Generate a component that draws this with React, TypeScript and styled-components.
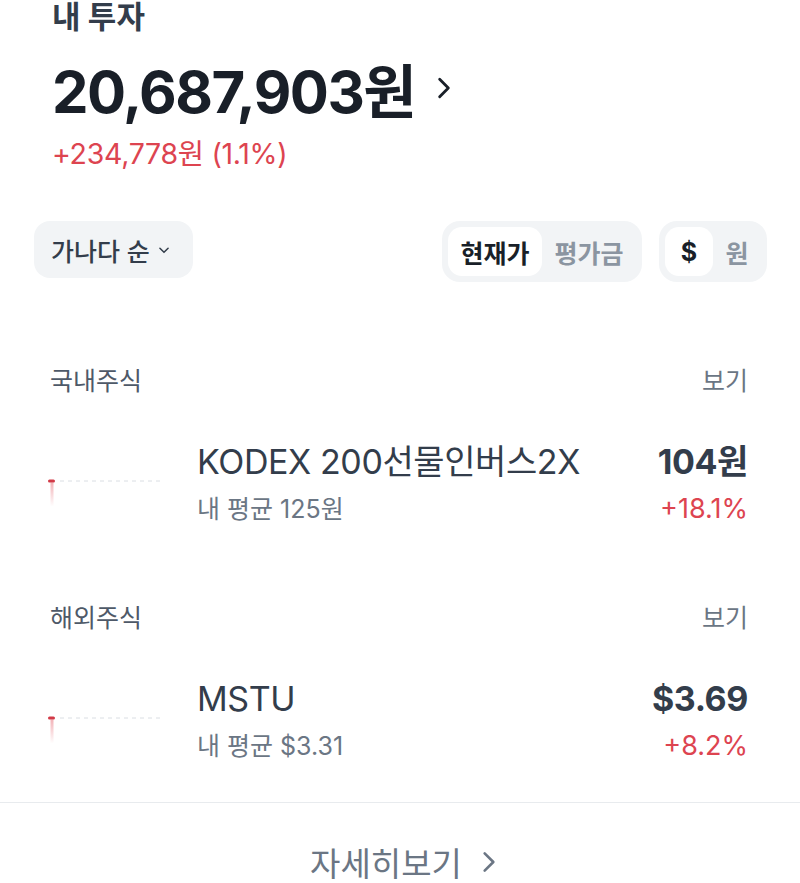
import { FC } from 'react';
import styled, { createGlobalStyle } from 'styled-components';

const GlobalStyle = createGlobalStyle`
  body {
    margin: 0;
    background: #fff;
    font-family: Inter, "Noto Sans CJK KR", sans-serif;
    -webkit-font-smoothing: antialiased;
  }
`;

type Holding = {
  name: string;
  avg: string;
  price: string;
  change: string;
};

const sections: { title: string; item: Holding }[] = [
  {
    title: '국내주식',
    item: { name: 'KODEX 200선물인버스2X', avg: '내 평균 125원', price: '104원', change: '+18.1%' },
  },
  {
    title: '해외주식',
    item: { name: 'MSTU', avg: '내 평균 $3.31', price: '$3.69', change: '+8.2%' },
  },
];

const Chevron: FC<{ size: number; color: string; stroke?: number }> = ({ size, color, stroke = 2.4 }) => (
  <svg width={size} height={size} viewBox="0 0 24 24" fill="none">
    <path d="M8 4l8 8-8 8" stroke={color} strokeWidth={stroke} strokeLinecap="round" strokeLinejoin="round" />
  </svg>
);

const MiniChart: FC = () => (
  <svg width="120" height="40" viewBox="0 0 120 40">
    <defs>
      <linearGradient id="fade" x1="0" y1="0" x2="0" y2="1">
        <stop offset="0" stopColor="#e0424e" stopOpacity="0.4" />
        <stop offset="1" stopColor="#e0424e" stopOpacity="0" />
      </linearGradient>
    </defs>
    <rect x="2.5" y="14.5" width="3" height="24" fill="url(#fade)" />
    <line x1="12" y1="13" x2="116" y2="13" stroke="#dadee3" strokeWidth="1" strokeDasharray="4 4" />
    <rect x="0" y="11.5" width="7" height="3" rx="1.5" fill="#d23a47" />
  </svg>
);

const App: FC = () => {
  return (
    <Page>
      <GlobalStyle />
      <Header>
        <Title>내 투자</Title>
        <Total>
          20,687,903원
          <Chevron size={26} color="#191f28" stroke={2.6} />
        </Total>
        <Change>+234,778원 (1.1%)</Change>
      </Header>

      <Controls>
        <SortButton>
          가나다 순
          <svg width="14" height="14" viewBox="0 0 24 24" fill="none">
            <path d="M5 9l7 7 7-7" stroke="#333d4b" strokeWidth="2.6" strokeLinecap="round" strokeLinejoin="round" />
          </svg>
        </SortButton>
        <Toggles>
          <Segment>
            <SegItem $active>현재가</SegItem>
            <SegItem>평가금</SegItem>
          </Segment>
          <Segment>
            <SegItem $active $narrow>$</SegItem>
            <SegItem $narrow>원</SegItem>
          </Segment>
        </Toggles>
      </Controls>

      <Sections>
        {sections.map((s) => (
          <Section key={s.title}>
            <SectionHead>
              <span>{s.title}</span>
              <span>보기</span>
            </SectionHead>
            <Row>
              <ChartBox>
                <MiniChart />
              </ChartBox>
              <Info>
                <Name>{s.item.name}</Name>
                <Sub>{s.item.avg}</Sub>
              </Info>
              <Values>
                <Price>{s.item.price}</Price>
                <Rate>{s.item.change}</Rate>
              </Values>
            </Row>
          </Section>
        ))}
      </Sections>

      <Divider />
      <More>
        자세히보기
        <Chevron size={26} color="#6b7684" stroke={2.4} />
      </More>
    </Page>
  );
};

const Page = styled.div`
  width: 800px;
  height: 883px;
  overflow: hidden;
  background: #fff;
`;
const Header = styled.div`
  padding: 0 52px;
`;
const Title = styled.div`
  margin-top: -3px;
  height: 40px;
  line-height: 40px;
  font-size: 31px;
  font-weight: 700;
  color: #333d4b;
`;
const Total = styled.div`
  display: flex;
  align-items: center;
  gap: 16px;
  margin-top: 15px;
  height: 72px;
  font-size: 58px;
  font-weight: 700;
  letter-spacing: -1.5px;
  color: #191f28;
`;
const Change = styled.div`
  margin-top: 12px;
  height: 36px;
  line-height: 36px;
  font-size: 28.5px;
  color: #dd4450;
  letter-spacing: -0.3px;
`;
const Controls = styled.div`
  display: flex;
  justify-content: space-between;
  align-items: flex-start;
  margin-top: 49px;
  padding: 0 33px 0 34px;
`;
const SortButton = styled.div`
  display: flex;
  align-items: center;
  gap: 7px;
  height: 57px;
  padding: 0 22px 0 17px;
  border-radius: 16px;
  background: #f2f4f6;
  font-size: 25px;
  font-weight: 500;
  color: #333d4b;
`;
const Toggles = styled.div`
  display: flex;
  gap: 17px;
`;
const Segment = styled.div`
  display: flex;
  height: 61px;
  padding: 6px;
  box-sizing: border-box;
  border-radius: 18px;
  background: #f2f4f6;
`;
const SegItem = styled.div<{ $active?: boolean; $narrow?: boolean }>`
  display: flex;
  align-items: center;
  justify-content: center;
  width: ${(p) => (p.$narrow ? '48px' : '94px')};
  border-radius: 14px;
  background: ${(p) => (p.$active ? '#fff' : 'transparent')};
  font-size: 25px;
  font-weight: ${(p) => (p.$active ? 700 : 600)};
  color: ${(p) => (p.$active ? '#191f28' : '#8b95a1')};
`;
const Sections = styled.div`
  display: flex;
  flex-direction: column;
  gap: 75px;
  margin-top: 82px;
`;
const Section = styled.div`
  padding: 0 52px 0 48px;
`;
const SectionHead = styled.div`
  display: flex;
  justify-content: space-between;
  height: 34px;
  line-height: 34px;
  padding-left: 2px;
  font-size: 25px;
  color: #4e5968;
  & > span:last-child {
    color: #6b7684;
  }
`;
const Row = styled.div`
  display: flex;
  align-items: center;
  margin-top: 44px;
`;
const ChartBox = styled.div`
  width: 149px;
  flex-shrink: 0;
  display: flex;
  align-items: center;
  padding-top: 8px;
`;
const Info = styled.div`
  flex: 1;
  display: flex;
  flex-direction: column;
  gap: 10px;
`;
const Name = styled.div`
  height: 40px;
  line-height: 40px;
  font-size: 34px;
  color: #333d4b;
  letter-spacing: -0.4px;
`;
const Sub = styled.div`
  height: 34px;
  line-height: 34px;
  font-size: 25px;
  color: #6b7684;
`;
const Values = styled(Info)`
  flex: none;
  align-items: flex-end;
`;
const Price = styled(Name)`
  font-weight: 700;
  color: #333d4b;
`;
const Rate = styled(Sub)`
  font-size: 27px;
  color: #dd4450;
`;
const Divider = styled.div`
  margin-top: 39px;
  height: 1px;
  background: #e8ebee;
`;
const More = styled.div`
  display: flex;
  align-items: center;
  justify-content: center;
  gap: 14px;
  margin-top: 39px;
  height: 40px;
  font-size: 33px;
  color: #6b7684;
  padding-left: 12px;
`;

export default App;
